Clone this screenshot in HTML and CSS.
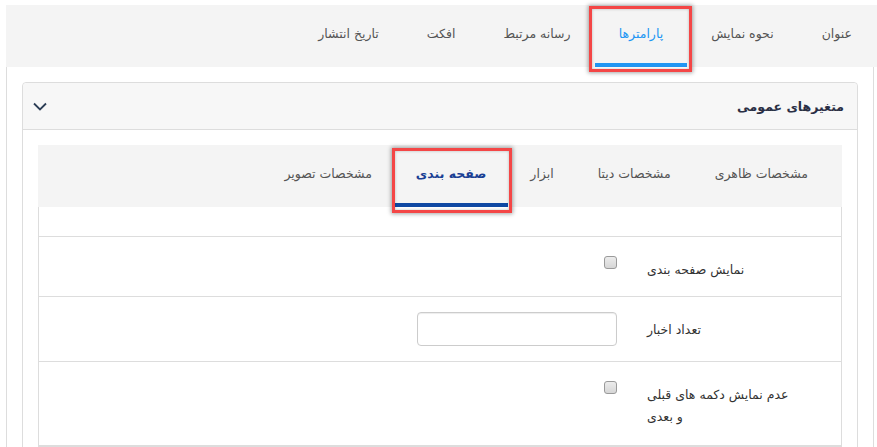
FILE: index.html
```html
<!DOCTYPE html>
<html lang="fa" dir="rtl">
<head>
<meta charset="utf-8">
<title>پارامترها</title>
<link rel="stylesheet" href="styles.css">
</head>
<body>
<div class="wrap">
  <nav class="tabs top-tabs">
    <div class="tab">عنوان</div>
    <div class="tab">نحوه نمایش</div>
    <div class="tab active">پارامترها<span class="mark mark-top"></span></div>
    <div class="tab">رسانه مرتبط</div>
    <div class="tab">افکت</div>
    <div class="tab">تاریخ انتشار</div>
  </nav>
  <div class="panel">
    <section class="card">
      <header class="card-head">
        <h2 class="card-title">متغیرهای عمومی</h2>
        <svg class="chev" width="14" height="9" viewBox="0 0 14 9"><path d="M1 1.5 L7 7.5 L13 1.5" fill="none" stroke="#2c3e56" stroke-width="1.8"/></svg>
      </header>
      <div class="card-body">
        <nav class="tabs inner-tabs">
          <div class="tab">مشخصات ظاهری</div>
          <div class="tab">مشخصات دیتا</div>
          <div class="tab">ابزار</div>
          <div class="tab active">صفحه بندی<span class="mark mark-inner"></span></div>
          <div class="tab">مشخصات تصویر</div>
        </nav>
        <div class="tab-content">
          <div class="row row-empty"></div>
          <div class="row">
            <label class="lbl">نمایش صفحه بندی</label>
            <div class="ctl"><input type="checkbox" class="chk"></div>
          </div>
          <div class="row">
            <label class="lbl">تعداد اخبار</label>
            <div class="ctl"><input type="text" class="txt"></div>
          </div>
          <div class="row">
            <label class="lbl">عدم نمایش دکمه های قبلی و بعدی</label>
            <div class="ctl"><input type="checkbox" class="chk"></div>
          </div>
        </div>
      </div>
    </section>
  </div>
</div>
</body>
</html>
```
FILE: styles.css
```css
* { box-sizing: border-box; }
html, body { margin: 0; padding: 0; background: #fff; }
body {
  font-family: "DejaVu Sans", "Noto Sans", sans-serif;
  font-size: 12.5px;
  color: #555;
  direction: rtl;
  overflow: hidden;
  height: 447px;
}
.wrap { padding: 5px 0 0 6px; height: 447px; overflow: hidden; }

.tabs { display: flex; flex-direction: row; }
.tab {
  position: relative;
  height: 62px;
  padding: 0 24px 2px;
  display: flex;
  align-items: center;
  border-bottom: 4px solid transparent;
  white-space: nowrap;
  color: #555;
}
.top-tabs { background: #f4f4f4; height: 62px; padding-right: 1px; }
.top-tabs .tab.active { color: #2196f3; border-bottom-color: #2196f3; }
.inner-tabs { background: #f4f4f4; height: 62px; padding-right: 12px; }
.inner-tabs .tab { padding: 0 22px 2px; }
.inner-tabs .tab.active { color: #1a3f94; border-bottom-color: #0f48a3; font-weight: bold; }

.mark {
  position: absolute;
  border: 3px solid #f44646;
  box-shadow: 0 0 4px 1px rgba(0,0,0,0.35), inset 0 0 3px rgba(0,0,0,0.25);
  pointer-events: none;
}
.mark-top { left: -6px; right: -5px; top: 1px; bottom: -9px; }
.mark-inner { left: -2px; right: -4px; top: 3px; bottom: -10px; }

.panel {
  margin-right: 3px;
  border-left: 1px solid #ddd;
  border-right: 1px solid #ddd;
  padding: 15px 15px 0;
  height: 380px;
  overflow: hidden;
}
.card {
  border: 1px solid #ddd;
  border-radius: 4px;
  height: 400px;
}
.card-head {
  height: 47px;
  background: #f7f7f7;
  border-bottom: 1px solid #ddd;
  border-radius: 4px 4px 0 0;
  display: flex;
  align-items: center;
  justify-content: space-between;
  padding: 0 13px 0 10px;
}
.card-title {
  margin: 0;
  font-size: 12.5px;
  font-weight: bold;
  color: #2a2f45;
}
.chev { display: block; }
.card-body { padding: 15px; }

.tab-content {
  border: 1px solid #ddd;
  border-top: none;
}
.row {
  display: flex;
  flex-direction: row;
  padding: 15px 50px 15px 0;
  border-bottom: 1px solid #ddd;
}
.row:last-child { padding-bottom: 17px; }
.row-empty { height: 30px; padding: 0; }
.lbl {
  width: 144px;
  padding-top: 7px;
  line-height: 22px;
  text-align: left;
  color: #333;
}
.ctl { margin-right: 30px; }
.chk {
  -webkit-appearance: none;
  appearance: none;
  display: block;
  width: 13px;
  height: 13px;
  margin: 4px 0 0;
  border: 1px solid #9a9a9a;
  border-radius: 3px;
  background: linear-gradient(#ececec, #d6d6d6);
}
.txt {
  display: block;
  width: 200px;
  height: 34px;
  margin: 0;
  border: 1px solid #ccc;
  border-radius: 4px;
  background: #fff;
  box-shadow: inset 0 1px 1px rgba(0,0,0,0.075);
}
```
